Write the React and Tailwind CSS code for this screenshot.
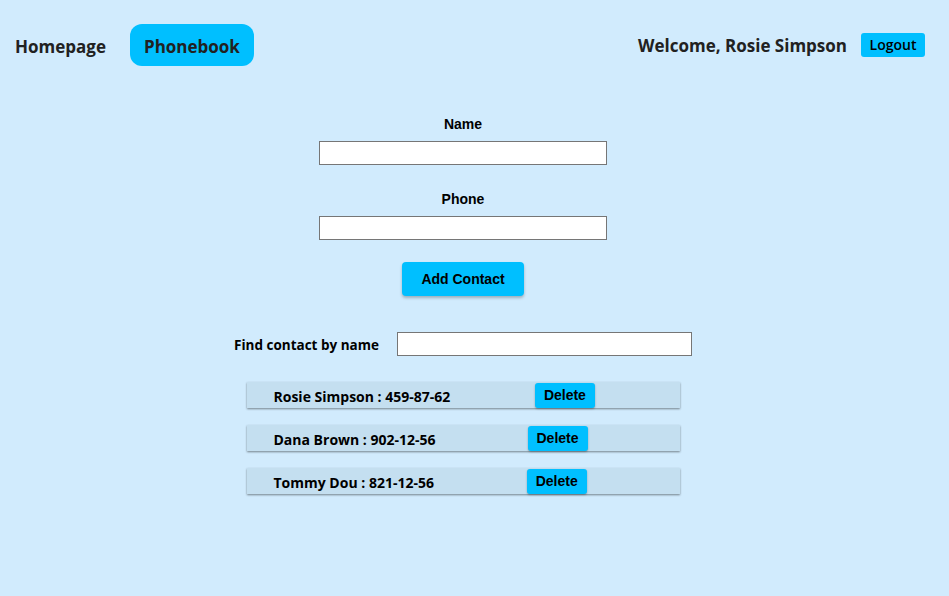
const contacts = [
  { id: 1, name: 'Rosie Simpson', number: '459-87-62' },
  { id: 2, name: 'Dana Brown', number: '902-12-56' },
  { id: 3, name: 'Tommy Dou', number: '821-12-56' },
];

export default function App() {
  return (
    <div className="min-h-[596px] bg-[#d1ebfd] font-['Open_Sans',sans-serif] text-[#212121]">
      <header className="flex h-[90px] items-center justify-between pl-[15px] pr-[24px]">
        <nav className="flex items-center gap-[24px] text-[17px] font-bold">
          <a className="pb-[6px] pt-[10px]">Homepage</a>
          <a className="rounded-[12px] bg-[#00bfff] px-[14px] pb-[6px] pt-[10px]">Phonebook</a>
        </nav>
        <div className="flex items-center gap-[14px]">
          <p className="pt-[2px] text-[17px] font-bold">Welcome, Rosie Simpson</p>
          <button className="h-[24px] w-[64px] rounded-[3px] bg-[#00bfff] pb-[2px] text-[14px] font-semibold text-black">
            Logout
          </button>
        </div>
      </header>

      <main className="flex flex-col items-center pr-[23px] pt-[25px] font-['Liberation_Sans',sans-serif] text-black">
        <form className="flex flex-col items-center">
          <label className="flex flex-col items-center text-[14px] font-bold leading-[16px]">
            <span className="pt-[1px]">Name</span>
            <input type="text" className="mt-[9px] h-[24px] w-[288px] border border-[#767676] bg-white" />
          </label>
          <label className="mt-[25px] flex flex-col items-center text-[14px] font-bold leading-[16px]">
            <span className="pt-[1px]">Phone</span>
            <input type="tel" className="mt-[9px] h-[24px] w-[288px] border border-[#767676] bg-white" />
          </label>
          <button
            type="button"
            className="mt-[22px] h-[34px] w-[122px] rounded-[4px] bg-[#00bfff] text-[14px] font-bold shadow-[0_2px_3px_rgba(0,0,0,0.25)]"
          >
            Add Contact
          </button>
        </form>

        <div className="mt-[36px] flex items-center gap-[18px]">
          <span className="pt-[2px] font-['Open_Sans',sans-serif] text-[13.5px] font-bold">Find contact by name</span>
          <input type="text" className="h-[24px] w-[295px] border border-[#767676] bg-white" />
        </div>

        <ul className="mt-[26px] flex flex-col gap-[17px]">
          {contacts.map((c) => (
            <li
              key={c.id}
              className="flex h-[26px] w-[433px] items-center bg-[#c4dff0] pl-[27px] shadow-[0_1px_2px_rgba(0,0,0,0.45)]"
            >
              <span className="pt-[3px] font-['Open_Sans',sans-serif] text-[14px] font-bold">
                {c.name} : {c.number}
              </span>
              <button className="mx-auto mt-[1px] h-[25px] rounded-[3px] bg-[#00bfff] px-[9px] text-[14px] font-bold shadow-[0_1px_2px_rgba(0,0,0,0.3)]">
                Delete
              </button>
            </li>
          ))}
        </ul>
      </main>
    </div>
  );
}
